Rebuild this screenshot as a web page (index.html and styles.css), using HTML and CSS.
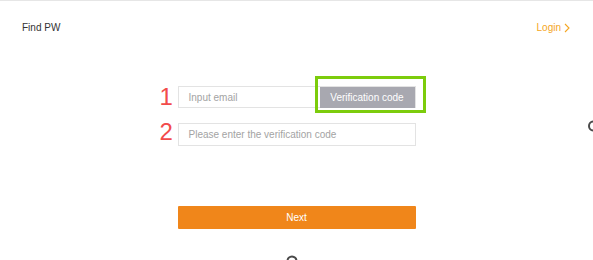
FILE: index.html
```html
<!DOCTYPE html>
<html>
<head>
<meta charset="utf-8">
<link rel="stylesheet" href="styles.css">
</head>
<body>
<div class="page">
  <header class="header">
    <div class="title">Find PW</div>
    <a class="login">Login <svg class="chev" width="6" height="10" viewBox="0 0 6 10"><path d="M1 1 L5 5 L1 9" fill="none" stroke="#f5a623" stroke-width="1.1"/></svg></a>
  </header>
  <form class="form">
    <div class="row">
      <span class="num">1</span>
      <div class="field">
        <span class="ph">Input email</span>
        <span class="code-btn">Verification code</span>
      </div>
      <span class="mark"></span>
    </div>
    <div class="row row2">
      <span class="num">2</span>
      <div class="field">
        <span class="ph">Please enter the verification code</span>
      </div>
    </div>
    <div class="next">Next</div>
  </form>
  <svg class="arc-right" width="6" height="12" viewBox="0 0 6 12"><path d="M6 1.5 A4 4.5 0 0 0 6 10.5" fill="none" stroke="#4a4a4a" stroke-width="2"/></svg>
  <svg class="arc-bottom" width="12" height="7" viewBox="0 0 12 7"><path d="M1.5 7 A4.5 4.5 0 0 1 10.5 7" fill="none" stroke="#4a4a4a" stroke-width="2"/></svg>
</div>
</body>
</html>
```

FILE: styles.css
```css
html, body {
  margin: 0;
  padding: 0;
  background: #ffffff;
}
.page {
  position: relative;
  width: 593px;
  height: 260px;
  overflow: hidden;
  border-top: 1px solid #e6e6e6;
  box-sizing: border-box;
  font-family: "Liberation Sans", Arial, sans-serif;
}
.header {
  display: flex;
  justify-content: space-between;
  align-items: center;
  padding: 21px 23px 0 22px;
  height: 12px;
  font-size: 10px;
  line-height: 12px;
}
.title {
  color: #333333;
}
.login {
  color: #f5a623;
  display: flex;
  align-items: center;
  gap: 3px;
}
.chev {
  display: block;
}
.form {
  width: 238px;
  margin: 52px auto 0;
  display: flex;
  flex-direction: column;
}
.row {
  position: relative;
}
.row2 {
  margin-top: 15px;
}
.num {
  position: absolute;
  left: -18px;
  top: -1px;
  font-size: 24px;
  line-height: 24px;
  color: #f24b4b;
}
.row2 .num {
  top: -3px;
}
.field {
  box-sizing: border-box;
  height: 23px;
  border: 1px solid #e3e3e3;
  display: flex;
  align-items: center;
  justify-content: space-between;
  padding-left: 10px;
  font-size: 10px;
}
.row:first-child .field {
  height: 22px;
}
.ph {
  color: #a3a3a3;
}
.code-btn {
  width: 95px;
  height: 21px;
  margin-top: 1px;
  background: #a8a8b0;
  color: #ffffff;
  font-size: 10px;
  display: flex;
  align-items: center;
  justify-content: center;
}
.mark {
  position: absolute;
  left: 137px;
  top: -10px;
  width: 111px;
  height: 37px;
  box-sizing: border-box;
  border: 3px solid #7ccc0c;
}
.next {
  margin-top: 60px;
  height: 23px;
  background: #f0861a;
  color: #ffffff;
  font-size: 10px;
  display: flex;
  align-items: center;
  justify-content: center;
  border-radius: 1px;
}
.arc-right {
  position: absolute;
  left: 587px;
  top: 119px;
}
.arc-bottom {
  position: absolute;
  left: 286px;
  top: 253px;
}
```
